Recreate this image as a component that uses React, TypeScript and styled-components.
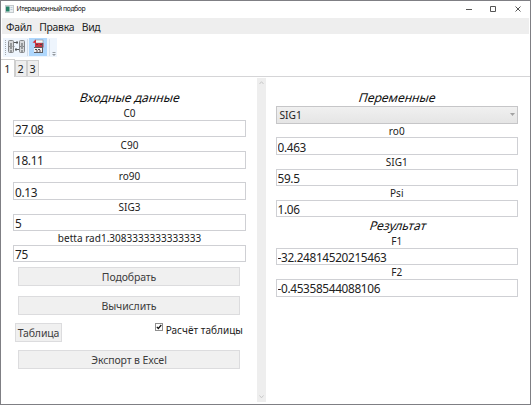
import React from "react";
import styled, { createGlobalStyle } from "styled-components";

const GlobalStyle = createGlobalStyle`
  *, *::before, *::after { box-sizing: border-box; }
  body {
    margin: 0;
    overflow: hidden;
    background: #fff;
    color: #222;
    font-family: "Noto Sans", "Open Sans", sans-serif;
  }
  input, button { font-family: inherit; color: inherit; margin: 0; }
`;

const Window = styled.div`
  width: 531px;
  height: 405px;
  display: flex;
  flex-direction: column;
  border: 1px solid #7f7f84;
  background: #fff;
`;

const TitleBar = styled.header`
  height: 17px;
  flex: none;
  display: flex;
  align-items: center;
  justify-content: space-between;
  padding: 0 8px 2px 4px;
`;

const TitleLeft = styled.div`
  display: flex;
  align-items: center;
  gap: 2.5px;
`;

const TitleText = styled.span`
  font-size: 6.8px;
  line-height: 12px;
  letter-spacing: -0.4px;
  color: #111;
  white-space: nowrap;
`;

const MenuBar = styled.nav`
  height: 16px;
  flex: none;
  display: flex;
  gap: 7.5px;
  margin: 0 1px;
  padding-left: 4px;
  background: #eeeeee;
`;

const MenuItem = styled.span`
  font-size: 10.4px;
  line-height: 18px;
  letter-spacing: -0.28px;
  white-space: nowrap;
`;

const ToolBar = styled.div`
  width: 54px;
  height: 19px;
  flex: none;
  display: flex;
  align-items: center;
  margin: 4px 0 0 2px;
  background: #eef5fd;
`;

const TabStrip = styled.div`
  height: 18px;
  flex: none;
  display: flex;
  align-items: flex-end;
  margin-top: 2px;
  border-bottom: 1px solid #d5d5d7;
`;

const Tab = styled.div<{ $active?: boolean }>`
  width: ${(p) => (p.$active ? 13.5 : 12)}px;
  height: ${(p) => (p.$active ? 18 : 16)}px;
  margin-bottom: ${(p) => (p.$active ? -1 : 0)}px;
  border: 1px solid #cfcfcf;
  border-left-width: ${(p) => (p.$active ? 0 : 1)}px;
  border-bottom: 0;
  background: ${(p) => (p.$active ? "#fff" : "#eeeeee")};
  font-size: 10.8px;
  line-height: ${(p) => (p.$active ? 17 : 16)}px;
  text-align: center;
`;

const Content = styled.main`
  flex: 1;
  min-height: 0;
  display: grid;
  grid-template-columns: 243.5px 9px 252.5px;
  padding-left: 12px;
`;

const Panel = styled.section<{ $side: "left" | "right" }>`
  padding-top: 12.4px;
  padding-left: ${(p) => (p.$side === "right" ? 10 : 0)}px;
  width: ${(p) => (p.$side === "right" ? 252.5 : 233)}px;
`;

const Heading = styled.h2<{ $height: number }>`
  height: ${(p) => p.$height}px;
  margin: 0;
  font-size: 12.2px;
  font-weight: 400;
  line-height: 18px;
  letter-spacing: 0;
  text-align: center;
  color: #111;
  white-space: nowrap;
`;

const Slanted = styled.span`
  display: inline-block;
  transform: translateX(1px) skewX(-17deg);
`;

const Field = styled.label`
  display: block;
  height: 31.2px;
`;

const FieldLabel = styled.span`
  display: block;
  height: 13.7px;
  font-size: 10px;
  line-height: 15.5px;
  letter-spacing: 0.02px;
  text-align: center;
  white-space: nowrap;
`;

const TextBox = styled.input`
  display: block;
  width: 100%;
  height: 17.4px;
  border: 1px solid #cfd0d4;
  border-radius: 0;
  background: #fff;
  padding: 1px 1px 0;
  font-size: 11.8px;
  line-height: 15px;
  letter-spacing: -0.33px;
  outline: none;
`;

const SelectBox = styled.div`
  height: 18px;
  display: flex;
  align-items: center;
  justify-content: space-between;
  padding: 1px 2px 0 3px;
  border: 1px solid #c6c6c8;
  background: linear-gradient(#f0f0f0, #e5e5e5);
  font-size: 10.2px;
`;

const Button = styled.button<{ $small?: boolean }>`
  display: block;
  width: ${(p) => (p.$small ? 47 : 222)}px;
  height: 19px;
  padding: 1px 0 0;
  border: 1px solid #dcdcde;
  border-radius: 0;
  background: #f0f0f0;
  color: #3c3c3c;
  font-size: 10.5px;
  line-height: 16px;
  letter-spacing: -0.12px;
  text-align: center;
  white-space: nowrap;
`;

const Actions = styled.div`
  display: flex;
  flex-direction: column;
  gap: 10px;
  padding: 4.6px 0 0 5px;
`;

const TableRow = styled.div`
  display: flex;
  justify-content: space-between;
  height: 17px;
  width: 228px;
  margin: -2px 0 0 -3px;
`;

const CheckLabel = styled.div`
  display: flex;
  gap: 2.5px;
  font-size: 10px;
  line-height: 15px;
  letter-spacing: 0.04px;
  white-space: nowrap;
  color: #222;
`;

const ScrollTrack = styled.div`
  display: flex;
  flex-direction: column;
  justify-content: space-between;
  align-items: center;
  margin: 1px 0 2px;
  padding: 3px 0;
  background: #eeeeee;
`;

const Chevron = ({ down }: { down?: boolean }) => (
  <svg width="5" height="4" viewBox="0 0 5 4" fill="none" stroke="#c8c8c8" strokeWidth="1">
    <path d={down ? "M.5 .5 2.5 2.8 4.5 .5" : "M.5 3 2.5 .7 4.5 3"} />
  </svg>
);

const AppIcon = () => (
  <svg width="9" height="8" viewBox="0 0 9 8">
    <rect x=".5" y=".5" width="8" height="7" fill="#e9eef0" stroke="#c3c9cc" />
    <rect x="1" y="1.5" width="3.5" height="5" fill="#258267" />
    <path d="M5.5 2.5h2M5.5 4.5h2" stroke="#b8c8d8" />
  </svg>
);

const ToolIcons = () => (
  <svg width="54" height="19" viewBox="0 0 54 19" fill="none">
    <path d="M2.5 2V17" stroke="#a3a8ad" strokeDasharray="1 1" />
    <g stroke="#85878a">
      <rect x="5.5" y="2.5" width="5" height="12" rx="1" fill="#d6d8da" />
      <rect x="16.5" y="2.5" width="5" height="12" rx="1" fill="#d6d8da" />
      <path d="M5 8.5h2M9.5 8.5h2M16 8.5h2M20 8.5h2" />
      <path d="M8 5V11M19 5V11M7 13h2M18 13h2" stroke="#55585b" />
      <path d="M11 4.5h4M12 11.5h4M14 3v3M13 10v3" stroke="#55585b" />
    </g>
    <path d="M24.5 1V18" stroke="#d3dce5" />
    <rect x="26" y="0" width="18" height="18" fill="#afd7fc" />
    <rect x="32" y="2" width="8" height="3" fill="#f4f7f8" stroke="#817c80" strokeWidth=".5" />
    <path d="M29.5 4.5 33 1.5v3.5z" fill="#d52935" />
    <rect x="32" y="5" width="8.5" height="4.5" fill="#c83743" />
    <path d="M33 6.5h2M37 6.5h2" stroke="#713039" />
    <rect x="31" y="9" width="9" height="6" fill="#f2efee" />
    <path d="M31 9.5h9M39.5 5v10M31 14.5h9" stroke="#605d61" />
    <path d="M32 11.5h6M33 13h5" stroke="#554b4f" strokeDasharray="2 1" />
    <path d="M46.5 1V18" stroke="#d7e1eb" />
    <path d="M49.5 14.5h3" stroke="#9aa0a6" />
    <path d="M49 16h4l-2 2z" fill="#92989e" />
  </svg>
);

const WindowControls = () => (
  <svg width="57" height="8" viewBox="0 0 57 8" fill="none" stroke="#555" strokeWidth="1">
    <path d="M1 4.5h6M25.5 1.5h5v5h-5zM50.5 1.5l5 5M55.5 1.5l-5 5" />
  </svg>
);

const inputs = [
  ["C0", "27.08"],
  ["C90", "18.11"],
  ["ro90", "0.13"],
  ["SIG3", "5"],
  ["betta rad1.3083333333333333", "75"],
];
const variables = [
  ["ro0", "0.463"],
  ["SIG1", "59.5"],
  ["Psi", "1.06"],
];
const results = [
  ["F1", "-32.24814520215463"],
  ["F2", "-0.45358544088106"],
];

const Fields = ({ items }: { items: string[][] }) => (
  <>
    {items.map(([label, value]) => (
      <Field key={label}>
        <FieldLabel>{label}</FieldLabel>
        <TextBox defaultValue={value} spellCheck={false} />
      </Field>
    ))}
  </>
);

export default function App() {
  return (
    <>
      <GlobalStyle />
      <Window>
        <TitleBar>
          <TitleLeft>
            <AppIcon />
            <TitleText>Итерационный подбор</TitleText>
          </TitleLeft>
          <WindowControls />
        </TitleBar>
        <MenuBar>
          <MenuItem>Файл</MenuItem>
          <MenuItem>Правка</MenuItem>
          <MenuItem>Вид</MenuItem>
        </MenuBar>
        <ToolBar>
          <ToolIcons />
        </ToolBar>
        <TabStrip>
          <Tab $active>1</Tab>
          <Tab>2</Tab>
          <Tab>3</Tab>
        </TabStrip>
        <Content>
          <Panel $side="left">
            <Heading $height={17}><Slanted>Входные данные</Slanted></Heading>
            <Fields items={inputs} />
            <Actions>
              <Button>Подобрать</Button>
              <Button>Вычислить</Button>
              <TableRow>
                <Button $small>Таблица</Button>
                <CheckLabel>
                  <svg width="8" height="8" viewBox="0 0 8 8" fill="none">
                    <rect x=".5" y=".5" width="7" height="7" fill="#fff" stroke="#8f8f8f" />
                    <path d="M1.8 3.8 3.3 5.5 6.3 2" stroke="#111" strokeWidth="1.2" />
                  </svg>
                  <span>Расчёт таблицы</span>
                </CheckLabel>
              </TableRow>
              <Button>Экспорт в Excel</Button>
            </Actions>
          </Panel>
          <ScrollTrack>
            <Chevron />
            <Chevron down />
          </ScrollTrack>
          <Panel $side="right">
            <Heading $height={16.3}><Slanted>Переменные</Slanted></Heading>
            <SelectBox>
              <span>SIG1</span>
              <svg width="5" height="4" viewBox="0 0 5 4"><path d="M0 0h5L2.5 3z" fill="#a2a2a2" /></svg>
            </SelectBox>
            <Fields items={variables} />
            <Heading $height={17}><Slanted>Результат</Slanted></Heading>
            <Fields items={results} />
          </Panel>
        </Content>
      </Window>
    </>
  );
}
